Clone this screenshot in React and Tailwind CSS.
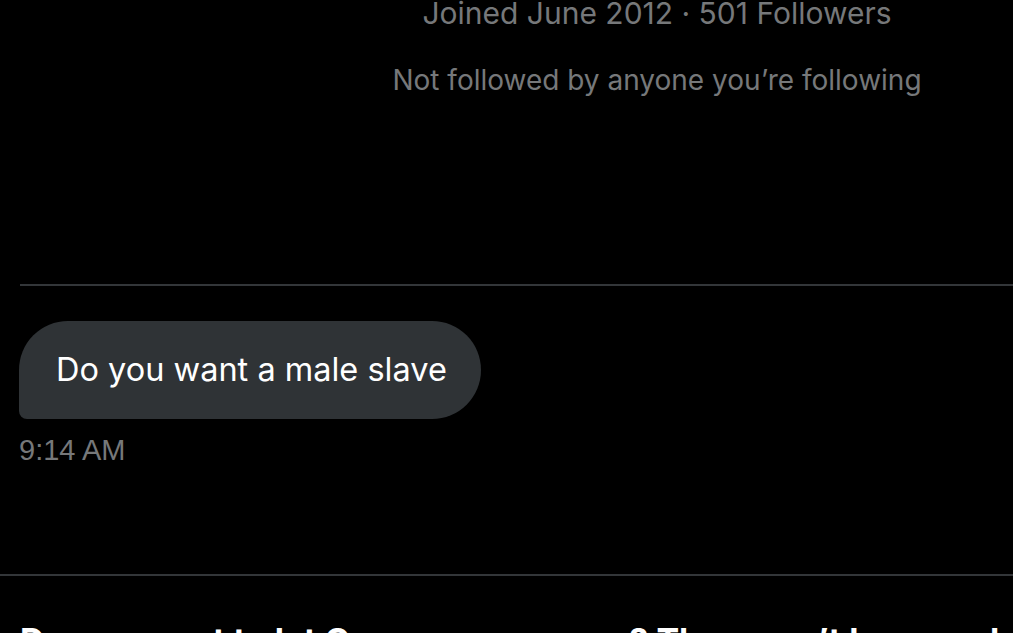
export default function App() {
  const font = { fontFamily: 'Inter, "Noto Sans", Roboto, sans-serif' };
  return (
    <div className="w-[1013px] h-[633px] bg-black overflow-hidden relative" style={font}>
      <div className="flex flex-col items-center pl-[301px] text-[#76787a]">
        <div className="text-[30px] leading-[36px] -mt-[5px] whitespace-nowrap">Joined June 2012 · 501 Followers</div>
        <div className="text-[28px] leading-[34px] mt-[32px] whitespace-nowrap">Not followed by anyone you’re following</div>
      </div>
      <div className="ml-[20px] mt-[187px] h-[2px] bg-[#333639]" />
      <div className="pl-[19px] mt-[35px]">
        <div className="inline-flex items-center h-[98px] w-[462px] pl-[37px] bg-[#2f3336] rounded-[49px] rounded-bl-[8px] text-white text-[32.5px] whitespace-nowrap">
          Do you want a male slave
        </div>
        <div className="mt-[14px] text-[#76787a] text-[29px] leading-[34px]" style={{ fontFamily: '"Liberation Sans", Arial, sans-serif' }}>9:14 AM</div>
      </div>
      <div className="mt-[107px] h-[2px] bg-[#333639]" />
      <div className="pl-[20px] mt-[45px] text-white text-[34px] font-bold leading-[40px] whitespace-nowrap">
        Do you want to let Cam message you? They won’t know unless you accept.
      </div>
    </div>
  );
}
